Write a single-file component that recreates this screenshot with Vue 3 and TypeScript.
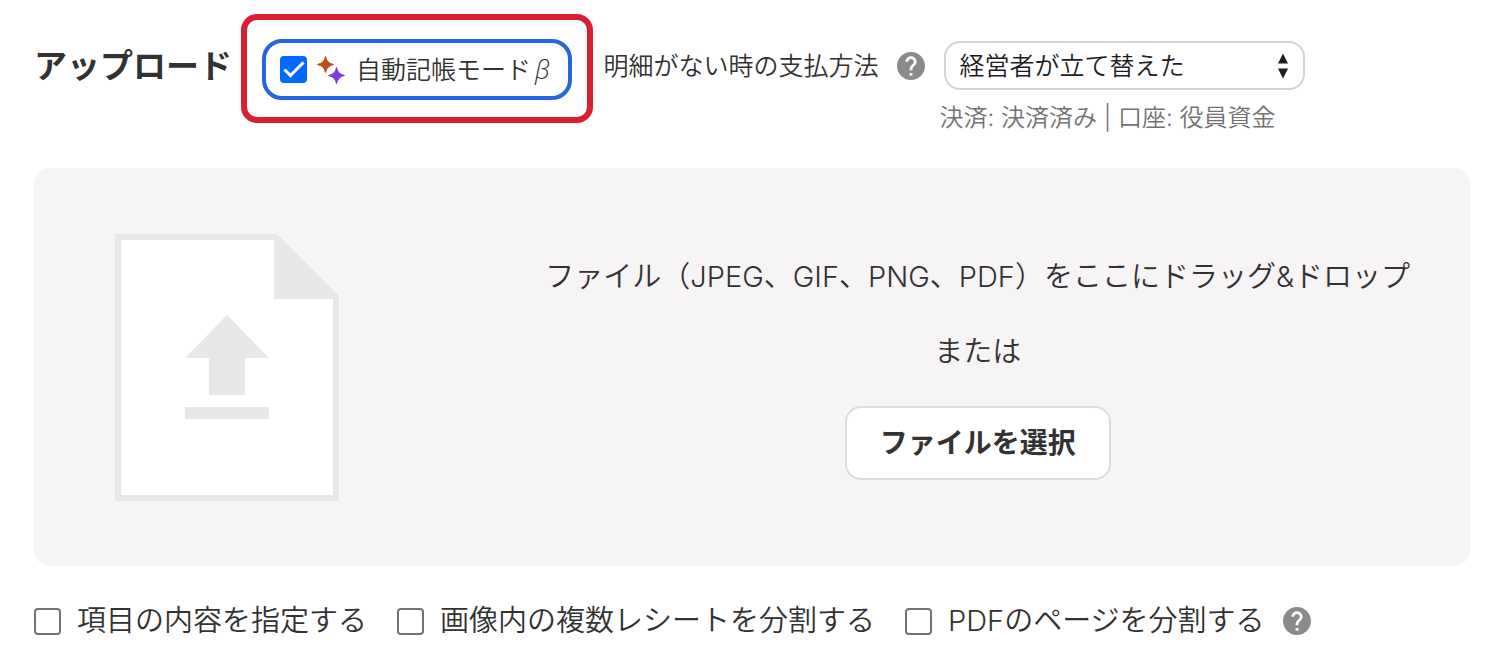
<script setup lang="ts">
import { ref } from 'vue'

interface SplitOption {
  id: string
  label: string
  help: boolean
  checked: boolean
}

const autoMode = ref(true)
const payment = ref('owner')
const fileInput = ref<HTMLInputElement | null>(null)
const options = ref<SplitOption[]>([
  { id: 'specify', label: '項目の内容を指定する', help: false, checked: false },
  { id: 'receipts', label: '画像内の複数レシートを分割する', help: false, checked: false },
  { id: 'pages', label: 'PDFのページを分割する', help: true, checked: false },
])

function chooseFile(): void {
  fileInput.value?.click()
}
</script>

<template>
  <main class="upload">
    <header class="top">
      <h1 class="title">アップロード</h1>
      <div class="highlight">
        <label class="auto-mode" for="auto-mode">
          <input id="auto-mode" v-model="autoMode" class="check" type="checkbox" />
          <svg class="sparkles" viewBox="0 0 28 28" aria-hidden="true">
            <defs>
              <linearGradient id="spark-warm" x1="0" y1="0" x2="1" y2="1">
                <stop offset="0.4" stop-color="#c2500c" />
                <stop offset="1" stop-color="#9a4a50" />
              </linearGradient>
              <linearGradient id="spark-cool" x1="0" y1="0" x2="1" y2="1">
                <stop offset="0" stop-color="#8a3fb4" />
                <stop offset="0.6" stop-color="#7c3aed" />
              </linearGradient>
            </defs>
            <path fill="url(#spark-warm)" d="M8.500 0.500Q9.800 7.200 16.500 8.500Q9.800 9.800 8.500 16.500Q7.200 9.800 0.500 8.500Q7.200 7.200 8.500 0.500Z" stroke="url(#spark-warm)" stroke-width="1" stroke-linejoin="round" />
            <path fill="url(#spark-cool)" d="M19.500 11.500Q20.800 18.200 27.500 19.500Q20.800 20.800 19.500 27.500Q18.200 20.800 11.500 19.500Q18.200 18.200 19.500 11.500Z" stroke="url(#spark-cool)" stroke-width="1" stroke-linejoin="round" />
          </svg>
          <span class="auto-label">自動記帳モード<i class="beta">β</i></span>
        </label>
      </div>
      <div class="payment">
        <label class="payment-label" for="payment">明細がない時の支払方法</label>
        <button class="help" type="button" aria-label="支払方法のヘルプ">
          <svg viewBox="2 2 20 20" aria-hidden="true">
            <path d="M12 2C6.480 2 2 6.480 2 12s4.480 10 10 10 10-4.480 10-10S17.520 2 12 2zm1 17h-2v-2h2v2zm2.070-7.750l-.9.920C13.450 12.900 13 13.500 13 15h-2v-.5c0-1.100.450-2.100 1.170-2.830l1.240-1.260c.370-.360.590-.860.590-1.410 0-1.100-.9-2-2-2s-2 .9-2 2H8c0-2.210 1.790-4 4-4s4 1.790 4 4c0 .880-.360 1.680-.930 2.250z" />
          </svg>
        </button>
        <div class="select-box">
          <select id="payment" v-model="payment" class="select">
            <option value="owner">経営者が立て替えた</option>
          </select>
          <svg class="arrows" viewBox="0 0 12 26" aria-hidden="true">
            <path d="M6 0.500L11 10.500H1ZM1 15.500H11L6 25.500Z" />
          </svg>
        </div>
        <p class="note">決済: 決済済み | 口座: 役員資金</p>
      </div>
    </header>

    <section class="dropzone">
      <svg class="document" viewBox="0 0 224 267" aria-hidden="true">
        <path fill="#e8e7e8" d="M0 0H162L224 62V267H0Z" />
        <path fill="#fff" d="M6 6H159V65H218V261H6Z" />
        <path fill="#e8e7e8" d="M112 81L154 124H130V161H94V124H70ZM70 173H154V185H70Z" />
      </svg>
      <div class="instructions">
        <p>ファイル（JPEG、GIF、PNG、PDF）をここにドラッグ&amp;ドロップ</p>
        <p>または</p>
        <button class="choose" type="button" @click="chooseFile">ファイルを選択</button>
        <input ref="fileInput" type="file" aria-label="ファイル" hidden multiple />
      </div>
    </section>

    <footer class="options">
      <div v-for="option in options" :key="option.id" class="option">
        <input :id="option.id" v-model="option.checked" class="check" type="checkbox" />
        <label :for="option.id">{{ option.label }}</label>
        <button v-if="option.help" class="help" type="button" aria-label="ページ分割のヘルプ">
          <svg viewBox="2 2 20 20" aria-hidden="true">
            <path d="M12 2C6.480 2 2 6.480 2 12s4.480 10 10 10 10-4.480 10-10S17.520 2 12 2zm1 17h-2v-2h2v2zm2.070-7.750l-.9.920C13.450 12.900 13 13.500 13 15h-2v-.5c0-1.100.450-2.100 1.170-2.830l1.240-1.260c.370-.360.590-.860.590-1.410 0-1.100-.9-2-2-2s-2 .9-2 2H8c0-2.210 1.790-4 4-4s4 1.790 4 4c0 .880-.360 1.680-.930 2.250z" />
          </svg>
        </button>
      </div>
    </footer>
  </main>
</template>

<style>
body {
  margin: 0;
  background: #fff;
}
</style>

<style scoped>
.upload,
.upload button,
.upload select {
  font-family: Inter, 'Noto Sans CJK JP', sans-serif;
}

.upload {
  padding: 14px 30px 32px 34px;
  color: #323232;
  font-size: 25px;
  font-weight: 350;
}

.top {
  display: flex;
  align-items: flex-start;
}

.title {
  margin: 28px 9px 0 0;
  font-size: 33px;
  line-height: 48px;
  font-weight: 700;
  white-space: nowrap;
}

.highlight {
  padding: 19px 15px 17px;
  border: 6px solid #dc1e32;
  border-radius: 16px;
}

.auto-mode {
  display: flex;
  align-items: center;
  height: 53px;
  padding: 0 18px 0 14px;
  border: 4px solid #2864e1;
  border-radius: 20px;
}

.auto-label {
  line-height: 36px;
  white-space: nowrap;
}

.sparkles {
  width: 28px;
  height: 28px;
  margin: 0 11px 0 10px;
}

.beta {
  margin-left: 4px;
  font-family: 'Open Sans', sans-serif;
  font-weight: 300;
}

.check {
  display: grid;
  place-items: center;
  flex: none;
  width: 27px;
  height: 27px;
  margin: 0;
  border: 2px solid #737373;
  border-radius: 4px;
  background: #fff;
  appearance: none;
}

.check:checked {
  border-color: #0069ff;
  background: #0069ff;
}

.check:checked::before {
  content: '';
  width: 20px;
  height: 10px;
  margin-bottom: 6px;
  border: solid #fff;
  border-width: 0 0 3px 3px;
  box-sizing: border-box;
  transform: rotate(-45deg);
}

.payment {
  display: grid;
  grid-template-columns: auto 28px auto;
  align-items: center;
  margin: 27px 0 0 11px;
}

.payment-label {
  margin-right: 18px;
  line-height: 36px;
  white-space: nowrap;
}

.help {
  width: 28px;
  height: 28px;
  padding: 0;
  border: 0;
  background: none;
}

.help svg {
  display: block;
  width: 28px;
  height: 28px;
  fill: #8c8989;
}

.select-box {
  display: grid;
  align-items: center;
  margin-left: 19px;
  width: 361px;
}

.select {
  grid-area: 1 / 1;
  width: 100%;
  height: 49px;
  padding: 0 40px 0 14px;
  border: 2px solid #d7d2d4;
  border-radius: 16px;
  background: #fff;
  color: #1e1e1e;
  font-size: 25px;
  font-weight: 350;
  appearance: none;
}

.arrows {
  grid-area: 1 / 1;
  justify-self: end;
  width: 12px;
  height: 26px;
  margin-right: 16px;
  fill: #1e1e1e;
  pointer-events: none;
}

.note {
  grid-column: 3;
  margin: 10px 0 0 15px;
  color: #737373;
  font-size: 24px;
  line-height: 36px;
  white-space: nowrap;
}

.dropzone {
  display: flex;
  align-items: center;
  justify-content: space-between;
  margin-top: 32px;
  padding: 66px 60px 65px 81px;
  border-radius: 16px;
  background: #f6f4f5;
}

.document {
  width: 224px;
  height: 267px;
}

.instructions {
  display: flex;
  flex-direction: column;
  align-items: center;
  font-size: 29px;
}

.instructions p {
  margin: 0 0 33px;
  line-height: 42px;
}

.choose {
  height: 74px;
  padding: 0 33px 4px;
  border: 2px solid #dcdcdc;
  border-radius: 16px;
  background: #fff;
  color: #323232;
  font-size: 28px;
  font-weight: 700;
}

.options {
  display: flex;
  gap: 30px;
  margin-top: 34px;
  font-size: 29px;
  line-height: 42px;
}

.option {
  display: flex;
  align-items: center;
}

.option label {
  margin-left: 16px;
}

.option .help {
  margin-left: 18px;
}
</style>
